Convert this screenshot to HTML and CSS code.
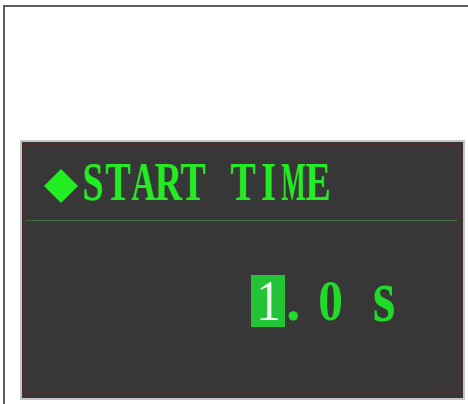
FILE: index.html
```html
<!DOCTYPE html>
<html>
<head>
<meta charset="utf-8">
<link rel="stylesheet" href="styles.css">
</head>
<body>
<div class="frame">
  <div class="panel">
    <div class="inner">
      <div class="header">
        <span class="diamond"></span>
        <span class="title"><span class="ch"><i>S</i></span><span class="ch"><i>T</i></span><span class="ch"><i class="w">A</i></span><span class="ch"><i>R</i></span><span class="ch"><i>T</i></span><span class="ch"> </span><span class="ch"><i>T</i></span><span class="ch"><i>I</i></span><span class="ch"><i class="ww">M</i></span><span class="ch"><i>E</i></span></span>
      </div>
      <div class="value">
        <span class="vc sel"><i>1</i></span><span class="vc dot"><i>.</i></span><span class="vc digit"><i>0</i></span><span class="vc gap"> </span><span class="vc unit"><i>s</i></span>
      </div>
    </div>
  </div>
</div>
</body>
</html>
```
FILE: styles.css
```css
html, body {
  margin: 0;
  padding: 0;
  background: #ffffff;
  overflow: hidden;
}

.frame {
  margin: 5px 0 0 3px;
  border-top: 2px solid #5e5e5e;
  border-left: 2px solid #5e5e5e;
  height: 399px;
  padding: 133px 0 0 15px;
  box-sizing: border-box;
}

.panel {
  width: 445px;
  height: 260px;
  box-sizing: border-box;
  border: 2px solid #c4c4c4;
  background: #373737;
  padding: 2px 4px 5px 2px;
  display: flex;
}

.inner {
  flex: 1;
  border: 2px solid #52302f;
  display: flex;
  flex-direction: column;
}

.header {
  height: 75px;
  box-sizing: border-box;
  border-bottom: 1px solid #3f6e3f;
  padding-top: 9px;
  display: flex;
  align-items: flex-start;
}

.diamond {
  width: 24px;
  height: 24px;
  margin: 19px 8px 0 23px;
  background: #22ee22;
  transform: rotate(45deg);
  flex: none;
}

.title {
  font-family: "Liberation Serif", "Times New Roman", serif;
  font-weight: bold;
  font-size: 54px;
  line-height: 54px;
  color: #24ec24;
  white-space: pre;
  display: flex;
}

.ch {
  display: inline-flex;
  justify-content: center;
  width: 25px;
  flex: none;
}

.ch i {
  display: inline-block;
  flex: none;
  font-style: normal;
  transform: scaleX(0.7);
}

.ch i.w {
  transform: scaleX(0.62);
}

.ch i.ww {
  transform: scaleX(0.48);
}

.value {
  padding: 54px 0 0 225px;
  display: flex;
  font-family: "Liberation Serif", "Times New Roman", serif;
  font-weight: bold;
  font-size: 58px;
  line-height: 52px;
  color: #20dc28;
  white-space: pre;
}

.vc {
  display: inline-flex;
  justify-content: center;
  height: 52px;
  flex: none;
}

.vc i {
  display: inline-block;
  flex: none;
  font-style: normal;
  transform: scaleX(0.85);
}

.sel {
  width: 34px;
  background: #22c436;
  color: #eef8ee;
  font-weight: normal;
}

.dot {
  width: 31px;
  justify-content: flex-start;
}

.dot i {
  transform: none;
  margin-left: 1px;
}

.digit {
  width: 28px;
}

.gap {
  width: 26px;
}

.unit {
  width: 28px;
}

.unit i {
  transform: scale(1, 1.28);
  transform-origin: 50% 80%;
}
```
